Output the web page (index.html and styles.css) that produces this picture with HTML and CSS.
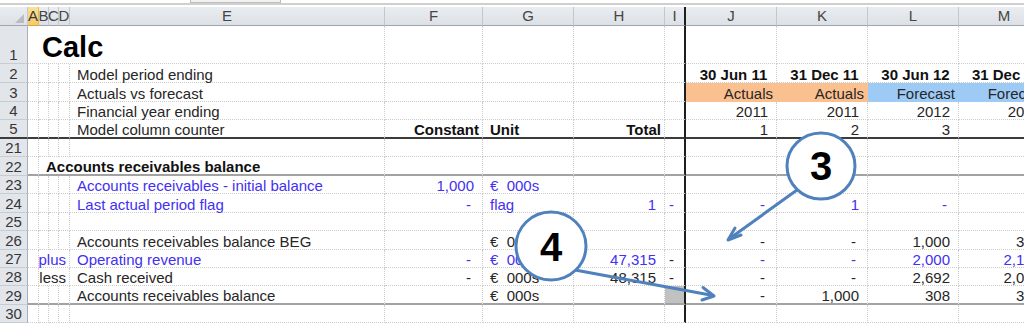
FILE: index.html
```html
<!DOCTYPE html>
<html>
<head>
<meta charset="utf-8">
<title>Calc</title>
<link rel="stylesheet" href="styles.css">
</head>
<body>
<div class="app">
  <div class="topbar"><span class="tab"></span></div>
  <div class="sheet">
    <div class="row">
      <div class="hc corner"><span class="tri"></span></div>
      <div class="hc sel">A</div><div class="hc">B</div><div class="hc">C</div><div class="hc">D</div>
      <div class="hc">E</div><div class="hc">F</div><div class="hc">G</div><div class="hc">H</div>
      <div class="hc i">I</div><div class="hc">J</div><div class="hc">K</div><div class="hc">L</div><div class="hc">M</div>
    </div>

    <div class="row">
      <div class="rh">1</div>
      <div class="c s5 title">Calc</div>
      <div class="c"></div><div class="c"></div><div class="c"></div><div class="c i"></div>
      <div class="c"></div><div class="c"></div><div class="c"></div><div class="c"></div>
    </div>

    <div class="row">
      <div class="rh">2</div>
      <div class="c"></div><div class="c"></div><div class="c"></div><div class="c"></div>
      <div class="c ind">Model period ending</div>
      <div class="c"></div><div class="c"></div><div class="c"></div><div class="c i"></div>
      <div class="c ctr b">30 Jun 11</div><div class="c ctr b">31 Dec 11</div><div class="c ctr b">30 Jun 12</div><div class="c ctr b">31 Dec 12</div>
    </div>

    <div class="row">
      <div class="rh">3</div>
      <div class="c"></div><div class="c"></div><div class="c"></div><div class="c"></div>
      <div class="c ind">Actuals vs forecast</div>
      <div class="c"></div><div class="c"></div><div class="c"></div><div class="c i"></div>
      <div class="c r act">Actuals</div><div class="c r act">Actuals</div><div class="c r fc">Forecast</div><div class="c r fc">Forecast</div>
    </div>

    <div class="row">
      <div class="rh">4</div>
      <div class="c"></div><div class="c"></div><div class="c"></div><div class="c"></div>
      <div class="c ind">Financial year ending</div>
      <div class="c"></div><div class="c"></div><div class="c"></div><div class="c i"></div>
      <div class="c num">2011</div><div class="c num">2011</div><div class="c num">2012</div><div class="c num">2012</div>
    </div>

    <div class="row frz">
      <div class="rh">5</div>
      <div class="c"></div><div class="c"></div><div class="c"></div><div class="c"></div>
      <div class="c ind">Model column counter</div>
      <div class="c r b">Constant</div><div class="c ind b">Unit</div><div class="c r b">Total</div><div class="c i"></div>
      <div class="c num">1</div><div class="c num">2</div><div class="c num">3</div><div class="c num">4</div>
    </div>

    <div class="row">
      <div class="rh">21</div>
      <div class="c"></div><div class="c"></div><div class="c"></div><div class="c"></div><div class="c"></div>
      <div class="c"></div><div class="c"></div><div class="c"></div><div class="c i"></div>
      <div class="c"></div><div class="c"></div><div class="c"></div><div class="c"></div>
    </div>

    <div class="row sec">
      <div class="rh">22</div>
      <div class="c"></div>
      <div class="c s4 ind b">Accounts receivables balance</div>
      <div class="c"></div><div class="c"></div><div class="c"></div><div class="c i"></div>
      <div class="c"></div><div class="c"></div><div class="c"></div><div class="c"></div>
    </div>

    <div class="row">
      <div class="rh">23</div>
      <div class="c"></div><div class="c"></div><div class="c"></div><div class="c"></div>
      <div class="c ind blue">Accounts receivables - initial balance</div>
      <div class="c num blue">1,000</div><div class="c ind blue">€&nbsp;&nbsp;000s</div><div class="c"></div><div class="c i"></div>
      <div class="c"></div><div class="c"></div><div class="c"></div><div class="c"></div>
    </div>

    <div class="row">
      <div class="rh">24</div>
      <div class="c"></div><div class="c"></div><div class="c"></div><div class="c"></div>
      <div class="c ind blue">Last actual period flag</div>
      <div class="c dash blue">-</div><div class="c ind blue">flag</div><div class="c num blue">1</div><div class="c i lt blue">-</div>
      <div class="c dash blue">-</div><div class="c num blue">1</div><div class="c dash blue">-</div><div class="c dash blue">-</div>
    </div>

    <div class="row">
      <div class="rh">25</div>
      <div class="c"></div><div class="c"></div><div class="c"></div><div class="c"></div><div class="c"></div>
      <div class="c"></div><div class="c"></div><div class="c"></div><div class="c i"></div>
      <div class="c"></div><div class="c"></div><div class="c"></div><div class="c"></div>
    </div>

    <div class="row">
      <div class="rh">26</div>
      <div class="c"></div><div class="c"></div><div class="c"></div><div class="c"></div>
      <div class="c ind">Accounts receivables balance BEG</div>
      <div class="c"></div><div class="c ind">€&nbsp;&nbsp;000s</div><div class="c"></div><div class="c i"></div>
      <div class="c dash">-</div><div class="c dash">-</div><div class="c num">1,000</div><div class="c num">308</div>
    </div>

    <div class="row">
      <div class="rh">27</div>
      <div class="c"></div>
      <div class="c s3 r blue">plus</div>
      <div class="c ind blue">Operating revenue</div>
      <div class="c dash blue">-</div><div class="c ind blue">€&nbsp;&nbsp;000s</div><div class="c num blue">47,315</div><div class="c i lt">-</div>
      <div class="c dash blue">-</div><div class="c dash blue">-</div><div class="c num blue">2,000</div><div class="c num blue">2,155</div>
    </div>

    <div class="row">
      <div class="rh">28</div>
      <div class="c"></div>
      <div class="c s3 r">less</div>
      <div class="c ind">Cash received</div>
      <div class="c dash">-</div><div class="c ind">€&nbsp;&nbsp;000s</div><div class="c num">48,315</div><div class="c i lt">-</div>
      <div class="c dash">-</div><div class="c dash">-</div><div class="c num">2,692</div><div class="c num">2,083</div>
    </div>

    <div class="row sec">
      <div class="rh">29</div>
      <div class="c"></div><div class="c"></div><div class="c"></div><div class="c"></div>
      <div class="c ind">Accounts receivables balance</div>
      <div class="c"></div><div class="c ind">€&nbsp;&nbsp;000s</div><div class="c"></div><div class="c i gray"></div>
      <div class="c dash">-</div><div class="c num">1,000</div><div class="c num">308</div><div class="c num">380</div>
    </div>

    <div class="row">
      <div class="rh">30</div>
      <div class="c"></div><div class="c"></div><div class="c"></div><div class="c"></div><div class="c"></div>
      <div class="c"></div><div class="c"></div><div class="c"></div><div class="c i"></div>
      <div class="c"></div><div class="c"></div><div class="c"></div><div class="c"></div>
    </div>
  </div>

  <svg class="callouts" width="1024" height="324" viewBox="0 0 1024 324">
    <g class="arrow">
      <line x1="797" y1="190" x2="729" y2="239"/>
      <polyline points="741,235 728,240 735,228"/>
      <line x1="575" y1="270" x2="713" y2="295.5"/>
      <polyline points="703,287.5 714,296 702,300"/>
    </g>
    <ellipse class="bubble" cx="821" cy="166" rx="34" ry="33"/>
    <text class="num-label" x="821" y="180">3</text>
    <ellipse class="bubble" cx="551" cy="246" rx="35" ry="34"/>
    <text class="num-label" x="551" y="261">4</text>
  </svg>
</div>
</body>
</html>
```

FILE: styles.css
```css
html, body {
  margin: 0;
  padding: 0;
  background: #ffffff;
}

body {
  width: 1024px;
  height: 324px;
  overflow: hidden;
  font-family: "Liberation Sans", Arial, sans-serif;
}

.app {
  position: relative;
  width: 1024px;
  height: 324px;
  overflow: hidden;
}

.topbar {
  height: 7px;
  box-sizing: border-box;
  padding-left: 190px;
  background: linear-gradient(to bottom, #ffffff 0, #ffffff 3px, #cfcfcf 3px, #cfcfcf 5px, #ffffff 5px);
}

.tab {
  display: block;
  width: 91px;
  height: 3px;
  box-sizing: border-box;
  border: 1px solid #bdbdbd;
  border-top: 0;
  background: #f1f1f1;
}

.sheet {
  display: grid;
  grid-template-columns: 28px 11px 10px 10px 11px 315px 98px 91px 91px 21px 91px 91px 91px 91px;
  grid-template-rows: 19px 38px 19px 19px 18px 19px 18px 19px 18px 19px 18px 19px 18px 18px 19px 18px;
  width: 1050px;
  font-size: 15px;
}

.row {
  display: contents;
}

/* column headers */
.hc {
  box-sizing: border-box;
  background: linear-gradient(to bottom, #e9ecf0, #dde1e6);
  border-right: 1px solid #c3c8ce;
  border-bottom: 1px solid #9ea6af;
  color: #454545;
  display: flex;
  align-items: center;
  justify-content: center;
  line-height: 16px;
  overflow: visible;
  white-space: nowrap;
}

.hc.sel {
  background: linear-gradient(to bottom, #fbe09a, #f5cb68);
  border-bottom-color: #e2a53a;
  border-right-color: #e9b956;
  color: #3a3a3a;
}

.hc.corner {
  align-items: flex-end;
  justify-content: flex-end;
  padding: 0 3px 2px 0;
}

.tri {
  width: 0;
  height: 0;
  border-left: 9px solid transparent;
  border-bottom: 9px solid #b9bdc3;
}

/* row headers */
.rh {
  box-sizing: border-box;
  background: #e2e5ea;
  border-right: 1px solid #a9b0b8;
  border-bottom: 1px solid #c7ccd2;
  color: #363636;
  display: flex;
  align-items: flex-end;
  justify-content: center;
  line-height: 15px;
  padding-bottom: 1px;
}

/* cells */
.c {
  box-sizing: border-box;
  border-right: 1px dotted #cdcdcd;
  border-bottom: 1px dotted #cdcdcd;
  display: flex;
  align-items: flex-end;
  padding: 0 3px;
  line-height: 14px;
  white-space: nowrap;
  color: #262626;
  min-width: 0;
}

.s3 { grid-column: span 3; }
.s4 { grid-column: span 4; }
.s5 { grid-column: span 5; }

.title {
  font-size: 29px;
  font-weight: bold;
  line-height: 30px;
  color: #000000;
  padding-left: 14px;
  padding-bottom: 1px;
}

.ind { padding-left: 7px; }
.lt { padding-left: 4px; }
.r { justify-content: flex-end; }
.num { justify-content: flex-end; padding-right: 8px; }
.dash { justify-content: flex-end; padding-right: 11px; }
.ctr { justify-content: center; padding-left: 8px; }
.b { font-weight: bold; color: #111111; }
.blue { color: #4330f2; }

.i { border-right: 2px solid #1e1e1e; }

.act {
  background: #fbc08f;
  border-right-color: transparent;
  border-bottom-color: transparent;
}

.fc {
  background: #9ecbf6;
  border-right-color: transparent;
  border-bottom-color: transparent;
}

.gray { background: #c1c1c1; }

/* freeze pane line below row 5 */
.frz > .c,
.frz > .rh {
  border-bottom: 2px solid #3c3c3c;
}

/* section separators */
.sec > .c {
  border-bottom: 2px solid #a2a2a2;
}

/* callouts overlay */
.callouts {
  position: absolute;
  left: 0;
  top: 0;
  pointer-events: none;
}

.arrow {
  fill: none;
  stroke: #4f81bd;
  stroke-width: 3;
  stroke-linecap: round;
  stroke-linejoin: round;
}

.bubble {
  fill: #ffffff;
  stroke: #4f81bd;
  stroke-width: 3;
}

.num-label {
  font-family: "Liberation Sans", Arial, sans-serif;
  font-weight: bold;
  font-size: 40px;
  fill: #000000;
  text-anchor: middle;
}
```
